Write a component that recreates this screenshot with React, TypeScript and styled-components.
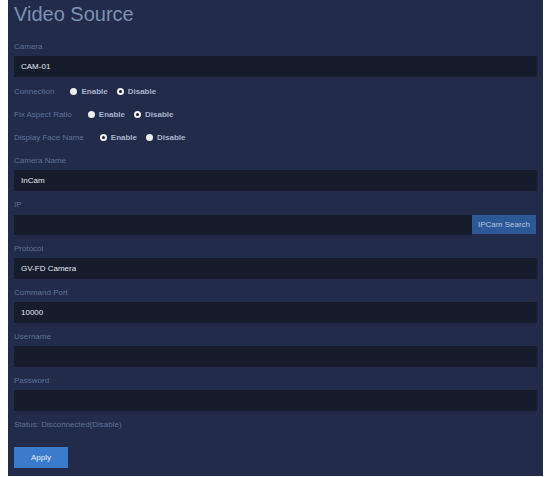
import { createGlobalStyle, styled } from "styled-components";

const GlobalStyle = createGlobalStyle`
  html, body {
    margin: 0;
    padding: 0;
    background: #ffffff;
  }
  body {
    padding-left: 8px;
    font-family: "Liberation Sans", Arial, sans-serif;
  }
`;

const Panel = styled.div`
  width: 535px;
  box-sizing: border-box;
  padding: 2px 6px 8px 6px;
  background-color: #222b49;
  display: flex;
  flex-direction: column;
`;

const Title = styled.h1`
  margin: 0 0 15px 0;
  font-size: 20px;
  line-height: 24px;
  font-weight: normal;
  color: #7d91b4;
`;

const Field = styled.div<{ $gap?: number }>`
  display: flex;
  flex-direction: column;
  margin-bottom: ${(p) => p.$gap ?? 8}px;
`;

const Label = styled.div`
  font-size: 8px;
  line-height: 12px;
  color: #5e739b;
  margin-bottom: 3px;
`;

const Input = styled.input`
  height: 21px;
  box-sizing: border-box;
  width: 100%;
  border: none;
  outline: none;
  padding: 0 7px;
  background-color: #171c2c;
  color: #e2e7f0;
  font-family: "Liberation Sans", Arial, sans-serif;
  font-size: 8px;
`;

const InputGroup = styled.div`
  display: flex;
  align-items: center;
  height: 21px;
`;

const GroupInput = styled(Input)`
  flex: 1;
  width: auto;
  height: 20px;
`;

const SearchButton = styled.button`
  height: 19px;
  width: 64px;
  margin-right: 1px;
  border: none;
  padding: 0;
  background-color: #2c5897;
  color: #b9c4d9;
  font-family: "Liberation Sans", Arial, sans-serif;
  font-size: 8px;
  cursor: pointer;
`;

const RadioGroup = styled.div`
  display: flex;
  flex-direction: column;
  padding-top: 3px;
  margin-bottom: 6px;
`;

const RadioRow = styled.div`
  display: flex;
  align-items: center;
  height: 23px;
`;

const RowLabel = styled.span`
  font-size: 8px;
  color: #5e739b;
  margin-right: 16px;
`;

const Option = styled.label`
  display: flex;
  align-items: center;
  gap: 4px;
  margin-right: 9px;
  font-size: 8px;
  font-weight: bold;
  color: #a9b4ce;
  cursor: pointer;
`;

const Dot = styled.span<{ $checked: boolean }>`
  width: 7px;
  height: 7px;
  box-sizing: border-box;
  border-radius: 50%;
  background-color: ${(p) => (p.$checked ? "#1b2030" : "#eeeeee")};
  border: ${(p) => (p.$checked ? "2px solid #f2f2f2" : "none")};
`;

const Status = styled.div`
  font-size: 8px;
  line-height: 12px;
  color: #5e739b;
  margin: 0 0 16px 0;
`;

const ApplyButton = styled.button`
  align-self: flex-start;
  width: 54px;
  height: 21px;
  border: none;
  padding: 0;
  background-color: #3a7ccb;
  color: #e6eef9;
  font-family: "Liberation Sans", Arial, sans-serif;
  font-size: 8px;
  cursor: pointer;
`;

const radios = [
  { label: "Connection", enabled: false },
  { label: "Fix Aspect Ratio", enabled: false },
  { label: "Display Face Name", enabled: true },
];

const fields = [
  { label: "Camera Name", value: "InCam" },
  { label: "IP", value: "", search: true },
  { label: "Protocol", value: "GV-FD Camera" },
  { label: "Command Port", value: "10000" },
  { label: "Username", value: "" },
  { label: "Password", value: "", password: true },
];

export default function App() {
  return (
    <>
      <GlobalStyle />
      <Panel>
        <Title>Video Source</Title>
        <Field $gap={0}>
          <Label>Camera</Label>
          <Input readOnly defaultValue="CAM-01" />
        </Field>
        <RadioGroup>
          {radios.map((r) => (
            <RadioRow key={r.label}>
              <RowLabel>{r.label}</RowLabel>
              <Option>
                <Dot $checked={r.enabled} />
                Enable
              </Option>
              <Option>
                <Dot $checked={!r.enabled} />
                Disable
              </Option>
            </RadioRow>
          ))}
        </RadioGroup>
        {fields.map((f) => (
          <Field key={f.label}>
            <Label>{f.label}</Label>
            {f.search ? (
              <InputGroup>
                <GroupInput readOnly defaultValue={f.value} />
                <SearchButton>IPCam Search</SearchButton>
              </InputGroup>
            ) : (
              <Input
                readOnly
                type={f.password ? "password" : "text"}
                defaultValue={f.value}
              />
            )}
          </Field>
        ))}
        <Status>Status: Disconnected(Disable)</Status>
        <ApplyButton>Apply</ApplyButton>
      </Panel>
    </>
  );
}
